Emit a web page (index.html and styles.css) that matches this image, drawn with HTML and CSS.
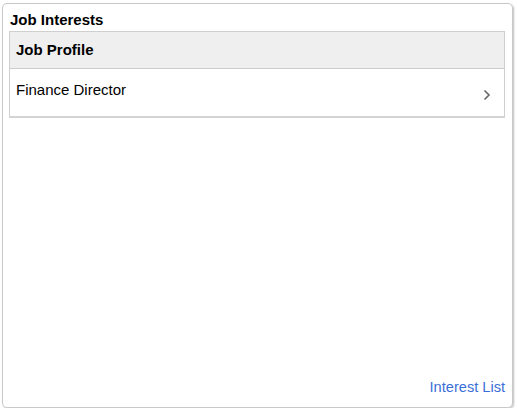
FILE: index.html
```html
<!DOCTYPE html>
<html>
<head>
<meta charset="utf-8">
<link rel="stylesheet" href="styles.css">
</head>
<body>
<div class="card">
  <div class="title">Job Interests</div>
  <div class="grid">
    <div class="head">Job Profile</div>
    <div class="row">
      <span class="name">Finance Director</span>
      <svg class="chev" width="8" height="12" viewBox="0 0 8 12"><path d="M1.5 1.5 L6 6 L1.5 10.5" fill="none" stroke="#666" stroke-width="1.6"/></svg>
    </div>
  </div>
  <div class="spacer"></div>
  <div class="footer"><a class="link" href="#">Interest List</a></div>
</div>
</body>
</html>
```
FILE: styles.css
```css
html, body { margin: 0; padding: 0; background: #fff; }
body { font-family: "Liberation Sans", Arial, sans-serif; font-size: 15px; color: #000; }
.card {
  box-sizing: border-box;
  margin: 3px 0 0 2px;
  width: 511px;
  height: 405px;
  border: 1px solid #c8c8c8;
  border-radius: 5px;
  box-shadow: 1px 1px 2px rgba(0,0,0,0.25);
  display: flex;
  flex-direction: column;
  padding: 0 7px 0 6px;
}
.title { font-weight: bold; padding-top: 7px; height: 20px; line-height: 18px; padding-left: 1px; }
.grid { border: 1px solid #cfcfcf; border-bottom: 2px solid #d4d4d4; }
.head {
  background: #efefef;
  font-weight: bold;
  height: 36px;
  line-height: 36px;
  padding-left: 6px;
  border-bottom: 1px solid #cccccc;
}
.row { height: 47px; display: flex; align-items: flex-start; padding-left: 6px; padding-right: 13px; }
.name { flex: 1; padding-top: 12px; line-height: 18px; }
.chev { margin-top: 20px; }
.spacer { flex: 1; }
.footer { display: flex; justify-content: flex-end; padding-bottom: 11px; }
.link { color: #3a6fd8; text-decoration: none; line-height: 18px; font-size: 14.6px; }
```
